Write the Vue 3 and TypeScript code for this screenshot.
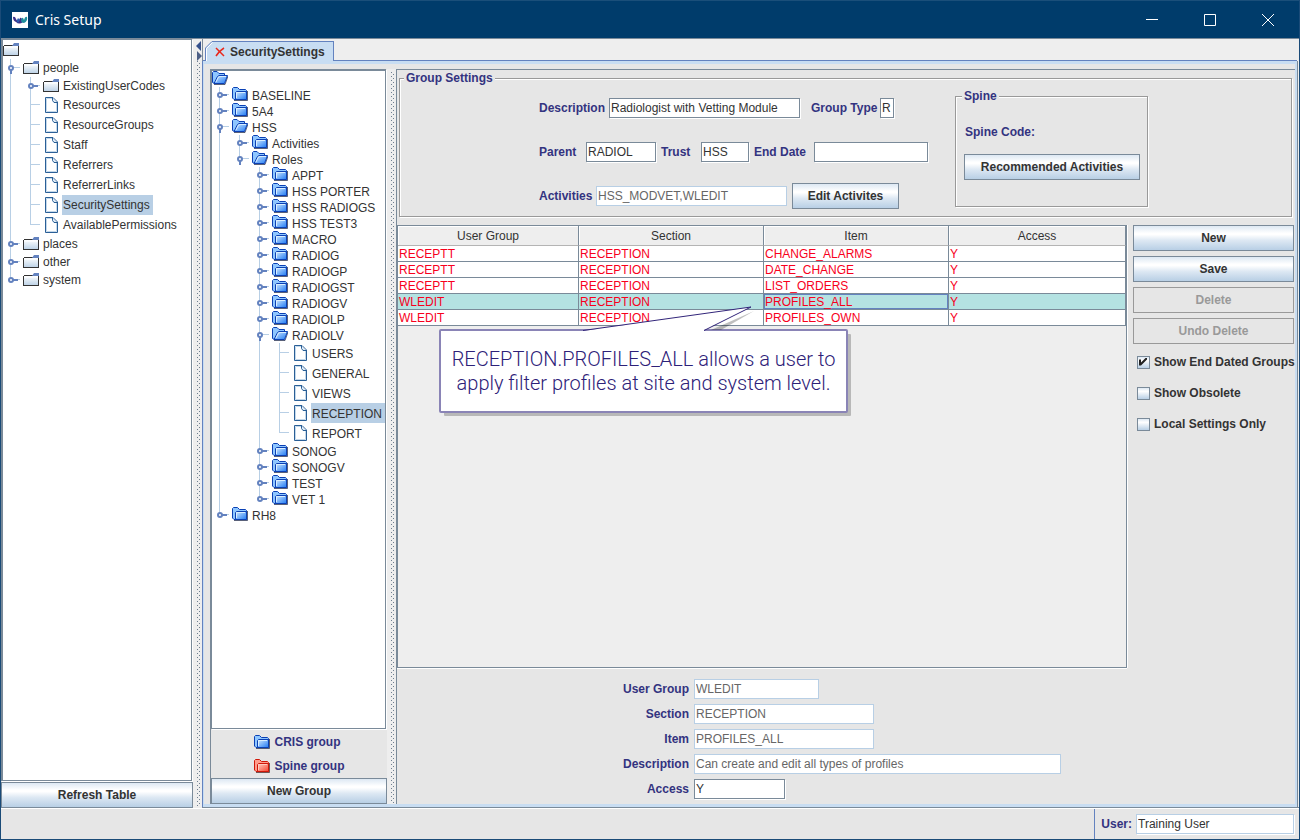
<script setup lang="ts">
import { ref } from 'vue'

interface TreeNode {
  label: string
  open?: boolean
  leaf?: boolean
  selected?: boolean
  children?: TreeNode[]
}
interface TreeRow {
  label: string
  height: number
  icon: string
  selected: boolean
  guides: boolean[]
  last: boolean
  root: boolean
  kind: 'leaf' | 'open' | 'closed'
}

const leaf = (label: string, selected = false): TreeNode => ({ label, leaf: true, selected })
const closed = (label: string): TreeNode => ({ label })

const setupTree: TreeNode = {
  label: '',
  open: true,
  children: [
    {
      label: 'people',
      open: true,
      children: [
        closed('ExistingUserCodes'),
        leaf('Resources'),
        leaf('ResourceGroups'),
        leaf('Staff'),
        leaf('Referrers'),
        leaf('ReferrerLinks'),
        leaf('SecuritySettings', true),
        leaf('AvailablePermissions'),
      ],
    },
    closed('places'),
    closed('other'),
    closed('system'),
  ],
}

const groupTree: TreeNode = {
  label: '',
  open: true,
  children: [
    closed('BASELINE'),
    closed('5A4'),
    {
      label: 'HSS',
      open: true,
      children: [
        closed('Activities'),
        {
          label: 'Roles',
          open: true,
          children: [
            ...['APPT', 'HSS PORTER', 'HSS RADIOGS', 'HSS TEST3', 'MACRO', 'RADIOG', 'RADIOGP', 'RADIOGST', 'RADIOGV', 'RADIOLP'].map(closed),
            {
              label: 'RADIOLV',
              open: true,
              children: [leaf('USERS'), leaf('GENERAL'), leaf('VIEWS'), leaf('RECEPTION', true), leaf('REPORT')],
            },
            ...['SONOG', 'SONOGV', 'TEST', 'VET 1'].map(closed),
          ],
        },
      ],
    },
    closed('RH8'),
  ],
}

function flatten(root: TreeNode, folderHeight: number, closedIcon: string, openIcon: string): TreeRow[] {
  const rows: TreeRow[] = []
  const walk = (node: TreeNode, guides: boolean[], last: boolean, depth: number) => {
    rows.push({
      label: node.label,
      height: node.leaf ? 20 : folderHeight,
      icon: node.leaf ? '#i-file' : node.open ? openIcon : closedIcon,
      selected: !!node.selected,
      guides,
      last,
      root: depth === 0,
      kind: node.leaf ? 'leaf' : node.open ? 'open' : 'closed',
    })
    const kids = node.children ?? []
    kids.forEach((kid, i) => walk(kid, depth === 0 ? [] : [...guides, !last], i === kids.length - 1, depth + 1))
  }
  walk(root, [], true, 0)
  return rows
}

const trees = {
  setup: flatten(setupTree, 18, '#i-grey', '#i-grey'),
  groups: flatten(groupTree, 16, '#i-blue', '#i-blue-open'),
}

const columns = ['User Group', 'Section', 'Item', 'Access']
const permissions = [
  ['RECEPTT', 'RECEPTION', 'CHANGE_ALARMS', 'Y'],
  ['RECEPTT', 'RECEPTION', 'DATE_CHANGE', 'Y'],
  ['RECEPTT', 'RECEPTION', 'LIST_ORDERS', 'Y'],
  ['WLEDIT', 'RECEPTION', 'PROFILES_ALL', 'Y'],
  ['WLEDIT', 'RECEPTION', 'PROFILES_OWN', 'Y'],
]
const activeRow = ref(3)

const details = [
  { id: 'd-group', label: 'User Group', value: 'WLEDIT', size: 'w-short', off: true },
  { id: 'd-section', label: 'Section', value: 'RECEPTION', size: 'w-mid', off: true },
  { id: 'd-item', label: 'Item', value: 'PROFILES_ALL', size: 'w-mid', off: true },
  { id: 'd-desc', label: 'Description', value: 'Can create and edit all types of profiles', size: 'w-full', off: true },
  { id: 'd-access', label: 'Access', value: 'Y', size: 'w-tiny', off: false },
]

const filters = ref([
  { id: 'f-ended', label: 'Show End Dated Groups', on: true },
  { id: 'f-obsolete', label: 'Show Obsolete', on: false },
  { id: 'f-local', label: 'Local Settings Only', on: false },
])
</script>

<template>
  <div class="window">
    <svg class="defs" width="0" height="0" aria-hidden="true">
      <defs>
        <linearGradient id="g-grey" x1="0" y1="0" x2="0" y2="1"><stop offset="0" stop-color="#fff" /><stop offset="1" stop-color="#b8cfe5" /></linearGradient>
        <linearGradient id="g-blue" x1="0" y1="0" x2="1" y2="1"><stop offset="0" stop-color="#d4ebff" /><stop offset="1" stop-color="#1f7af4" /></linearGradient>
        <linearGradient id="g-red" x1="0" y1="0" x2="1" y2="1"><stop offset="0" stop-color="#ffd0c4" /><stop offset="1" stop-color="#f8442e" /></linearGradient>
        <symbol id="i-grey" viewBox="0 0 16 16">
          <path d="M.5 14V4.500L2 3.500H15.500V14Z" fill="url(#g-grey)" />
          <path d="M0 4h1v10H0zM1 3h9v1H1zM0 13h16v1H0zM15 4h1v10h-1z" fill="#333" />
          <path d="M9 4l2-3h5v3z" fill="#6382bf" />
          <path d="M1 5h14" stroke="#fff" />
        </symbol>
        <symbol id="i-file" viewBox="0 0 16 16">
          <path d="M2.500.500H10L14.500 5V15.500H2.500Z" fill="#fff" stroke="#2a5f96" />
          <path d="M3.500 14.500V1.500H9M3.500 14.500H13.500V6" fill="none" stroke="#c4d8ea" />
          <path d="M9.500 1V3.500L11 5.500H14" fill="#dce9f5" stroke="#2a5f96" />
        </symbol>
        <symbol id="i-blue" viewBox="0 0 16 16">
          <path d="M2 14.500H15.500V5" fill="none" stroke="#222c4c" opacity=".75" />
          <path d="M.500 12V2.500L1.500 1.500H5.500L7.500 3.500H13.500L14.500 4.500V13.500H2Z" fill="#8ec6ff" stroke="#0b40b4" />
          <path d="M3.500 13.500V6.500L4.500 5.500H14.500V13.500Z" fill="url(#g-blue)" stroke="#0b40b4" />
          <path d="M4.500 12V6.500H13" fill="none" stroke="#d8eeff" />
        </symbol>
        <symbol id="i-blue-open" viewBox="0 0 16 16">
          <path d="M2 14.500H13L16 6" fill="none" stroke="#222c4c" opacity=".75" />
          <path d="M.500 12.500V2.500L1.500 1.500H5L7 3.500H12.500V6L2.500 13.500Z" fill="#8ec6ff" stroke="#0b40b4" />
          <path d="M2 13.500L5.500 6.500L7 5.500H15.500L12.500 13.500Z" fill="url(#g-blue)" stroke="#0b40b4" />
          <path d="M4 12L6.500 7L8 6.500H14" fill="none" stroke="#d8eeff" />
        </symbol>
        <symbol id="i-red" viewBox="0 0 16 16">
          <path d="M2 14.500H15.500V5" fill="none" stroke="#4c2222" opacity=".75" />
          <path d="M.500 12V2.500L1.500 1.500H5.500L7.500 3.500H13.500L14.500 4.500V13.500H2Z" fill="#ff9c8c" stroke="#d01808" />
          <path d="M3.500 13.500V6.500L4.500 5.500H14.500V13.500Z" fill="url(#g-red)" stroke="#d01808" />
          <path d="M4.500 12V6.500H13" fill="none" stroke="#ffc8bc" />
        </symbol>
      </defs>
    </svg>

    <header class="titlebar">
      <svg class="logo" width="16" height="16" viewBox="0 0 16 16">
        <path d="M0 0H16V16H0Z" fill="#fff" />
        <path d="M1 5Q3 4 4 7L6 10L8 6Q9 5 10 7L11 10Q7 13 4 10Q1 9 1 5Z" fill="#3c2f88" />
        <path d="M10 6Q11 5 12 8Q13 4 15 5Q16 9 12 11Q9 11 9 8Z" fill="#1f8f9c" />
        <path d="M6 6L8 8L6 11Q4 10 5 8Z" fill="#2b5db0" />
      </svg>
      <h1>Cris Setup</h1>
      <div class="win-buttons">
        <button type="button" aria-label="Minimize"><svg width="12" height="12"><path d="M0 5.500H12" /></svg></button>
        <button type="button" aria-label="Maximize"><svg width="12" height="12"><path d="M.500.500H11.500V11.500H.500Z" /></svg></button>
        <button type="button" aria-label="Close"><svg width="12" height="12"><path d="M0 0L12 12M12 0L0 12" /></svg></button>
      </div>
    </header>

    <main class="body">
      <aside class="nav">
        <div class="tree nav-tree">
          <div v-for="(row, i) in trees.setup" :key="i" class="row" :style="{ height: row.height + 'px' }">
            <svg v-for="(on, g) in row.guides" :key="g" width="20" :height="row.height"><path v-if="on" class="guide" :d="`M7.500 0V${row.height}`" /></svg>
            <svg v-if="!row.root" width="20" :height="row.height">
              <path class="guide" :d="`M7.500 0V${row.last ? row.height / 2 : row.height}M7 ${row.height / 2 - 0.5}H17`" />
              <g v-if="row.kind !== 'leaf'" class="handle">
                <path :d="row.kind === 'open' ? `M8 ${row.height / 2}v6` : `M8 ${row.height / 2}h7`" />
                <circle cx="8" :cy="row.height / 2" r="2" />
              </g>
            </svg>
            <svg class="icon" width="16" height="16"><use :href="row.icon" /></svg>
            <span v-if="row.label" class="name" :class="{ selected: row.selected }">{{ row.label }}</span>
          </div>
        </div>
        <button type="button" class="btn">Refresh Table</button>
      </aside>

      <div class="splitter outer">
        <svg class="arrows" width="6" height="22"><path d="M5 2V12L0 7Z" fill="#33508c" /><path d="M1 12V22L6 17Z" fill="#4c5f86" /></svg>
        <i class="dots"></i>
      </div>

      <section class="workspace">
        <div class="tabs">
          <svg width="8" height="20"><path d="M.500 20V7L7 .500H8V20Z" fill="#c8ddf2" /><path d="M1.500 20V7.500L7.500 1.500" fill="none" stroke="#fff" /><path d="M.500 20V7L7 .500H8" fill="none" stroke="#6382bf" /></svg>
          <button type="button" class="tab">
            <svg width="10" height="10" viewBox="0 0 10 10"><path d="M1 1L9 9M9 1Q4 4 1 9" fill="none" stroke="#e8281c" stroke-width="1.500" /></svg>
            SecuritySettings
          </button>
        </div>

        <div class="pane">
          <aside class="groups">
            <div class="tree group-tree">
              <div v-for="(row, i) in trees.groups" :key="i" class="row" :style="{ height: row.height + 'px' }">
                <svg v-for="(on, g) in row.guides" :key="g" width="20" :height="row.height"><path v-if="on" class="guide" :d="`M7.500 0V${row.height}`" /></svg>
                <svg v-if="!row.root" width="20" :height="row.height">
                  <path class="guide" :d="`M7.500 0V${row.last ? row.height / 2 : row.height}M7 ${row.height / 2 - 0.5}H17`" />
                  <g v-if="row.kind !== 'leaf'" class="handle">
                    <path :d="row.kind === 'open' ? `M8 ${row.height / 2}v6` : `M8 ${row.height / 2}h7`" />
                    <circle cx="8" :cy="row.height / 2" r="2" />
                  </g>
                </svg>
                <svg class="icon" :class="{ folder: row.kind !== 'leaf' }" width="16" height="16"><use :href="row.icon" /></svg>
                <span v-if="row.label" class="name" :class="{ selected: row.selected }">{{ row.label }}</span>
              </div>
            </div>
            <ul class="legend">
              <li><svg width="16" height="16"><use href="#i-blue" /></svg>CRIS group</li>
              <li><svg width="16" height="16"><use href="#i-red" /></svg>Spine group</li>
            </ul>
            <button type="button" class="btn">New Group</button>
          </aside>

          <div class="splitter inner"><i class="dots"></i></div>

          <div class="editor">
            <fieldset class="settings">
              <legend>Group Settings</legend>
              <div class="fields">
                <div class="line">
                  <label class="l-desc" for="s-desc">Description</label>
                  <input id="s-desc" class="w-desc" type="text" value="Radiologist with Vetting Module" />
                  <label class="l-type" for="s-type">Group Type</label>
                  <input id="s-type" class="w-char" type="text" value="R" />
                </div>
                <div class="line">
                  <label class="l-parent" for="s-parent">Parent</label>
                  <input id="s-parent" class="w-parent" type="text" value="RADIOL" />
                  <label class="l-trust" for="s-trust">Trust</label>
                  <input id="s-trust" class="w-trust" type="text" value="HSS" />
                  <label class="l-end" for="s-end">End Date</label>
                  <input id="s-end" class="w-end" type="text" value="" />
                </div>
                <div class="line">
                  <label class="l-act" for="s-act">Activities</label>
                  <input id="s-act" class="w-desc" type="text" value="HSS_MODVET,WLEDIT" disabled />
                  <button type="button" class="btn b-edit">Edit Activites</button>
                </div>
              </div>
              <fieldset class="spine">
                <legend>Spine</legend>
                <p>Spine Code:</p>
                <button type="button" class="btn">Recommended Activities</button>
              </fieldset>
            </fieldset>

            <div class="middle">
              <div class="grid">
                <table>
                  <colgroup><col class="c-first" /><col class="c-mid" /><col class="c-mid" /><col /></colgroup>
                  <thead>
                    <tr><th v-for="c in columns" :key="c" scope="col">{{ c }}</th></tr>
                  </thead>
                  <tbody>
                    <tr v-for="(r, i) in permissions" :key="i" :class="{ active: i === activeRow }" @click="activeRow = i">
                      <td v-for="(cell, j) in r" :key="j" :class="{ focused: i === activeRow && j === 2 }">{{ cell }}</td>
                    </tr>
                  </tbody>
                </table>
                <div class="callout">
                  <svg width="180" height="34" viewBox="0 0 180 34">
                    <path d="M132 25L175 6L142 25Z" fill="#000" opacity=".25" />
                    <path d="M4 26L172 2L125 25V29H4Z" fill="#fff" />
                    <path d="M4 25.500L172 2L125 25.500" fill="none" stroke="#32257a" />
                  </svg>
                  <p>RECEPTION.PROFILES_ALL allows a user to apply filter profiles at site and system level.</p>
                </div>
              </div>

              <div class="actions">
                <button type="button" class="btn">New</button>
                <button type="button" class="btn">Save</button>
                <button type="button" class="btn" disabled>Delete</button>
                <button type="button" class="btn" disabled>Undo Delete</button>
                <label v-for="f in filters" :key="f.id" class="check" :for="f.id">
                  <input :id="f.id" v-model="f.on" type="checkbox" />{{ f.label }}
                </label>
              </div>
            </div>

            <div class="details">
              <template v-for="d in details" :key="d.id">
                <label :for="d.id">{{ d.label }}</label>
                <input :id="d.id" :class="d.size" type="text" :value="d.value" :disabled="d.off" />
              </template>
            </div>
          </div>
        </div>
      </section>
    </main>

    <footer class="status">
      <div class="user">
        <label for="user">User:</label>
        <input id="user" type="text" value="Training User" readonly />
      </div>
    </footer>
  </div>
</template>

<style>
html,
body {
  margin: 0;
  background: #e6e6e6;
}
</style>

<style scoped>
.window {
  box-sizing: border-box;
  height: 100vh;
  min-height: 640px;
  display: flex;
  flex-direction: column;
  border: solid #1a4b78;
  border-width: 0 1px 1px;
  background: #e6e6e6;
  color: #333;
  font: 12px/14px "Liberation Sans", Arial, sans-serif;
}
.window * {
  box-sizing: border-box;
}
.defs {
  position: absolute;
}
svg {
  display: block;
  flex: none;
}
button,
input {
  font: inherit;
  color: inherit;
  margin: 0;
}

.titlebar {
  flex: none;
  height: 38px;
  display: flex;
  align-items: center;
  padding: 0 2px 0 11px;
  background: #003c6b;
  border-top: 1px solid #1a4f7a;
  color: #fff;
}
.titlebar h1 {
  flex: 1;
  margin: 0 0 0 7px;
  font: 14px/20px "Noto Sans", "Open Sans", sans-serif;
}
.win-buttons {
  display: flex;
}
.win-buttons button {
  width: 58px;
  height: 37px;
  padding: 0;
  display: flex;
  align-items: center;
  justify-content: center;
  background: none;
  border: 0;
}
.win-buttons path {
  fill: none;
  stroke: #fff;
}

.body {
  flex: 1;
  min-height: 0;
  display: flex;
  border-top: 1px solid #7a8a99;
}
.nav {
  width: 192px;
  display: flex;
  flex-direction: column;
}
.tree {
  flex: 1;
  background: #fff;
  border: solid #7a8a99;
  box-shadow: 1px 1px 0 #fff;
  overflow: hidden;
}
.nav-tree {
  border-width: 1px 1px 1px 2px;
  margin: 0 1px 1px 0;
  padding-top: 1px;
}
.row {
  display: flex;
  align-items: center;
}
.guide {
  fill: none;
  stroke: #b8cfe5;
}
.handle path {
  fill: none;
  stroke: #6382bf;
  stroke-width: 2;
}
.handle circle {
  fill: #fff;
  stroke: #6382bf;
  stroke-width: 2;
}
.name {
  height: 100%;
  display: flex;
  align-items: center;
  margin-left: 3px;
  padding: 0 3px 0 1px;
  white-space: nowrap;
}
.name.selected {
  background: #b8cfe5;
}
.group-tree .name {
  padding-top: 2px;
}
.group-tree .folder {
  margin-bottom: 2px;
}

.btn {
  height: 26px;
  padding: 0 4px;
  border: 1px solid #7a8a99;
  background: linear-gradient(#dde8f3, #fff 30%, #fff 36%, #dde8f3 60%, #b8cfe5);
  font-weight: bold;
  text-align: center;
  white-space: nowrap;
}
.btn:disabled {
  background: none;
  border-color: #999;
  color: #999;
}

.splitter {
  flex: none;
  width: 9px;
  display: flex;
  flex-direction: column;
  background: #eee;
}
.outer {
  padding: 0 0 2px 3px;
}
.inner {
  padding: 3px 0 0 4px;
}
.dots {
  flex: 1;
  width: 4px;
  background:
    conic-gradient(at 1px 1px, transparent 75%, #6f7f90 0) 0 0 / 4px 4px,
    conic-gradient(at 1px 1px, transparent 75%, #6f7f90 0) 2px 2px / 4px 4px;
}
.outer .dots {
  margin-left: 1px;
}

.workspace {
  flex: 1;
  min-width: 0;
  display: flex;
  flex-direction: column;
  padding-right: 2px;
  background: #eee;
  border-bottom: 1px solid #7a8a99;
  border-left: 1px solid #7a8a99;
}
.tabs {
  position: relative;
  height: 21px;
  display: flex;
  align-items: flex-end;
  padding-left: 2px;
  margin-top: 1px;
}
.tab {
  height: 20px;
  display: flex;
  align-items: center;
  gap: 5px;
  padding: 0 8px 0 2px;
  border: solid #6382bf;
  border-width: 1px 1px 0 0;
  background: #c8ddf2;
  font-weight: bold;
}
.pane {
  flex: 1;
  min-height: 0;
  display: flex;
  padding: 5px 0 0 6px;
  background: #e6e6e6;
  border: solid #c8ddf2;
  border-width: 3px 2px 3px 1px;
  box-shadow: 0 -1px 0 #6382bf, -1px 0 0 #6382bf, 1px 0 0 #7a8a99;
}

.groups {
  width: 177px;
  flex: none;
  display: flex;
  flex-direction: column;
  border-left: 1px solid #7a8a99;
}
.group-tree {
  border-width: 2px 1px 1px;
  margin: 0 1px 1px 0;
}
.legend {
  align-self: center;
  margin: 0;
  padding: 0;
  list-style: none;
  font-weight: bold;
  color: #333380;
}
.legend li {
  height: 24px;
  display: flex;
  align-items: center;
  gap: 5px;
}

.editor {
  flex: 1;
  min-width: 0;
  display: flex;
  flex-direction: column;
  border: solid #7a8a99;
  border-width: 1px 0 0 1px;
}
fieldset {
  margin: 0;
  border: 1px solid #999;
  box-shadow: 1px 1px 0 #fff, inset 1px 1px 0 #fff;
  min-width: 0;
}
legend {
  padding: 0 2px;
  background: #e6e6e6;
  font-weight: bold;
  color: #333380;
}
label,
.spine p {
  font-weight: bold;
  color: #333380;
  white-space: nowrap;
}
.settings {
  flex: none;
  display: flex;
  justify-content: center;
  align-items: flex-start;
  margin: 1px 3px 0 2px;
  padding: 4px 8px 7px 4px;
}
.fields {
  width: 390px;
  margin-right: 26px;
  padding-top: 6px;
  display: flex;
  flex-direction: column;
  gap: 18px;
}
.line {
  height: 26px;
  display: flex;
  align-items: center;
  gap: 5px;
}
input[type="text"] {
  height: 20px;
  padding: 0 1px;
  border: 1px solid #7a8a99;
  border-radius: 0;
  background: #fff;
  box-shadow: 1px 1px 0 #fff;
  outline: 0;
}
input[type="text"]:disabled {
  border-color: #b8cfe5;
  color: #666;
  box-shadow: none;
}
.l-desc { width: 65px; }
.l-type { width: 64px; margin-left: 6px; }
.l-parent { width: 42px; }
.l-trust { width: 35px; }
.l-end { width: 55px; }
.l-act { width: 52px; }
.w-desc { width: 191px; }
.w-char { width: 14px; }
.w-parent { width: 70px; }
.w-trust { width: 48px; }
.w-end { width: 114px; }
.b-edit { width: 107px; }
.spine {
  width: 193px;
  padding: 22px 8px 26px;
}
.spine legend {
  margin-left: -2px;
}
.spine p {
  margin: 0 0 15px 1px;
}
.spine .btn {
  width: 176px;
}

.middle {
  flex: 1;
  min-height: 0;
  display: flex;
  gap: 6px;
  margin-top: 8px;
  padding-right: 1px;
}
.grid {
  position: relative;
  flex: 1;
  min-width: 0;
  background: #eee;
  border: 1px solid #7a8a99;
  box-shadow: 0 1px 0 #fff, 1px 0 0 #fff;
}
table {
  width: 100%;
  table-layout: fixed;
  border-collapse: separate;
  border-spacing: 0;
}
.c-first { width: 181px; }
.c-mid { width: 185px; }
th {
  height: 20px;
  padding: 0;
  font-weight: normal;
  border-right: 1px solid #7a8a99;
  border-bottom: 1px solid #b4b4b4;
  background: #eee;
  box-shadow: inset 1px 1px 0 #fff;
}
td {
  height: 16px;
  padding: 1px 1px 0;
  line-height: 14px;
  background: #fff;
  color: #f8001c;
  border-right: 1px solid #7a8a99;
  border-bottom: 1px solid #7a8a99;
}
.active td {
  background: #b4e2e2;
}
.active .focused {
  box-shadow: inset 0 0 0 1px #6382bf;
}

.callout {
  position: absolute;
  left: 41px;
  top: 103px;
  width: 409px;
  height: 84px;
  border: 2px solid #8a84b6;
  border-radius: 2px;
  background: #fff;
  box-shadow: 4px 4px 0 -1px #b8b8b8;
}
.callout p {
  margin: 16px 0 0;
  padding: 0 8px;
  font: 300 20px/24px Roboto, sans-serif;
  text-align: center;
  color: #2d2178;
}
.callout svg {
  position: absolute;
  left: 138px;
  top: -26px;
}

.actions {
  width: 161px;
  flex: none;
  display: flex;
  flex-direction: column;
  gap: 5px;
}
.check {
  height: 26px;
  display: flex;
  align-items: center;
  gap: 4px;
  padding-left: 4px;
  color: #333;
}
.check input {
  appearance: none;
  width: 13px;
  height: 13px;
  flex: none;
  border: 1px solid #7a8a99;
  background: linear-gradient(#dde8f3, #fff 30%, #b8cfe5);
}
.check input:checked::before {
  content: "";
  display: block;
  width: 8px;
  height: 8px;
  margin: 1px;
  background: #222;
  clip-path: polygon(0 2px, 2px 2px, 2px 5px, 7px 0, 8px 0, 8px 2px, 2px 8px, 0 8px);
}

.details {
  flex: none;
  align-self: center;
  display: grid;
  grid-template-columns: auto 367px;
  gap: 5px;
  align-items: center;
  padding: 11px 8px 5px 0;
}
.details label {
  text-align: right;
}
.w-short { width: 125px; }
.w-mid { width: 180px; }
.w-full { width: 367px; }
.w-tiny { width: 91px; }

.status {
  flex: none;
  height: 31px;
  display: flex;
  justify-content: flex-end;
  border-top: 1px solid #fff;
}
.user {
  display: flex;
  align-items: center;
  gap: 4px;
  padding: 0 5px 0 6px;
  border-left: 1px solid #6382bf;
}
.user input[type="text"] {
  width: 158px;
  border-color: #b8cfe5;
}
</style>
